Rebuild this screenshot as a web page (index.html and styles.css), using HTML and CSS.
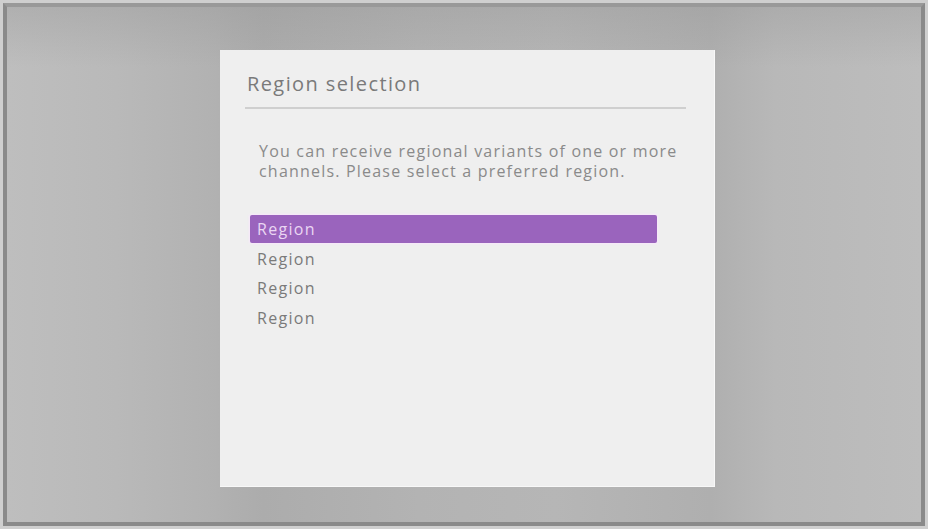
FILE: index.html
```html
<!DOCTYPE html>
<html>
<head>
<meta charset="utf-8">
<link rel="stylesheet" href="styles.css">
</head>
<body>
<div class="screen">
  <div class="panel">
    <div class="header">
      <h1 class="title">Region selection</h1>
    </div>
    <p class="desc">You can receive regional variants of one or more channels. Please select a preferred region.</p>
    <ul class="list">
      <li class="item selected">Region</li>
      <li class="item">Region</li>
      <li class="item">Region</li>
      <li class="item">Region</li>
    </ul>
  </div>
</div>
</body>
</html>
```

FILE: styles.css
```css
html, body {
  margin: 0;
  padding: 0;
  background: #cfcfcf;
  width: 928px;
  height: 529px;
  overflow: hidden;
}
body {
  font-family: "Open Sans", "Noto Sans", sans-serif;
}
.screen {
  box-sizing: border-box;
  margin: 3px 0 0 3px;
  width: 922px;
  height: 523px;
  border: 4px solid #8a8a8a;
  border-top-color: #999;
  background:
    linear-gradient(180deg, rgba(150,150,150,0.35) 0px, rgba(150,150,150,0) 60px),
    linear-gradient(90deg, #bebebe 0%, #b9b9b9 12%, #b2b2b2 22%, #acacac 28%, #b3b3b3 45%, #b6b6b6 60%, #afafaf 77%, #b8b8b8 84%, #bdbdbd 100%);
  padding: 43px 0 0 213px;
}
.panel {
  box-sizing: border-box;
  width: 495px;
  height: 437px;
  background: #efefef;
  border-right: 1px solid #f8f8f8;
  border-bottom: 1px solid #f8f8f8;
  padding: 0 28px 0 25px;
}
.header {
  border-bottom: 2px solid #cfcfcf;
  padding: 21px 0 10px 2px;
}
.title {
  margin: 0;
  font-size: 20px;
  font-weight: 400;
  line-height: 26px;
  letter-spacing: 1.4px;
  color: #7a7a7a;
}
.desc {
  margin: 32px 0 0 0;
  padding-left: 14px;
  font-size: 16px;
  line-height: 20px;
  letter-spacing: 1.2px;
  color: #8a8a8a;
}
.list {
  list-style: none;
  margin: 34px 0 0 5px;
  padding: 0;
  width: 407px;
}
.item {
  box-sizing: border-box;
  height: 29.5px;
  line-height: 28px;
  padding-left: 7px;
  font-size: 16px;
  letter-spacing: 1.3px;
  color: #7a7a7a;
}
.item.selected {
  height: 28px;
  margin-bottom: 1.5px;
  background: #9a64bd;
  border-radius: 2px;
  color: #ead6f3;
  box-shadow: 0 0 2px 1px rgba(250,230,255,0.8);
}
```
